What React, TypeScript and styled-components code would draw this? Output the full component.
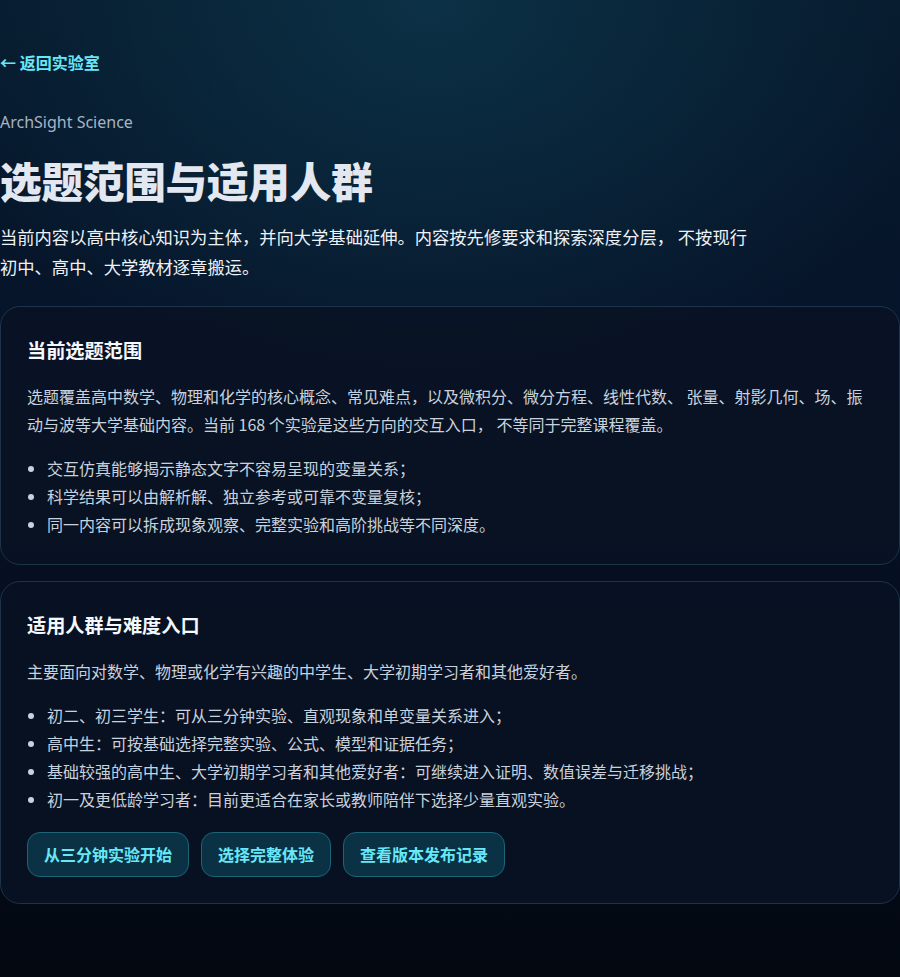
import React from "react";
import styled, { createGlobalStyle } from "styled-components";

const GlobalStyle = createGlobalStyle`
  html, body {
    margin: 0;
    padding: 0;
    background: #040a16;
  }
  body {
    font-family: "Noto Sans", "Noto Sans CJK SC", sans-serif;
    color: #e6ebf2;
  }
  * { box-sizing: border-box; }
`;

const Page = styled.div`
  min-height: 977px;
  background:
    radial-gradient(ellipse 520px 420px at 48% 0%, rgba(13, 56, 78, 0.75), rgba(13, 56, 78, 0) 100%),
    linear-gradient(180deg, #071a2c 0%, #06142a 35%, #050d1d 70%, #030811 100%);
`;

const Main = styled.main`
  width: 900px;
  padding: 50px 0 72px;
  display: flex;
  flex-direction: column;
`;

const BackLink = styled.a`
  display: block;
  font-size: 16px;
  line-height: 24px;
  font-weight: 700;
  color: #67e8f9;
  text-decoration: none;
  font-family: "Noto Sans CJK SC", sans-serif;
`;

const Eyebrow = styled.p`
  margin: 36px 0 0;
  font-size: 16px;
  line-height: 24px;
  color: #a7b4c4;
  font-family: "Noto Sans", "Noto Sans CJK SC", sans-serif;
`;

const Title = styled.h1`
  margin: 21px 0 0;
  font-size: 41.6px;
  line-height: 50px;
  font-weight: 900;
  color: #e3e8f0;
  font-family: "Noto Sans CJK SC", sans-serif;
  letter-spacing: -0.2px;
`;

const Lead = styled.p`
  margin: 17px 0 0;
  max-width: 760px;
  font-size: 17.3px;
  line-height: 30px;
  color: #eef2f7;
  font-family: "Noto Sans CJK SC", sans-serif;
`;

const Cards = styled.div`
  margin-top: 24px;
  display: flex;
  flex-direction: column;
  gap: 16px;
`;

const Card = styled.section`
  border: 1px solid #1d3349;
  border-radius: 20px;
  background: rgba(9, 18, 35, 0.88);
  padding: 31px 33px 26px 26px;
`;

const CardTitle = styled.h2`
  margin: 0;
  font-size: 19.2px;
  line-height: 25px;
  font-weight: 700;
  color: #f5f8fc;
  font-family: "Noto Sans CJK SC", sans-serif;
`;

const CardText = styled.p`
  margin: 19px 0 0;
  font-size: 16px;
  line-height: 28px;
  color: #c8d2de;
  font-family: "Noto Sans CJK SC", sans-serif;
`;

const List = styled.ul`
  margin: 16px 0 0;
  padding: 0 0 0 20px;
  font-size: 16px;
  line-height: 28px;
  color: #c8d2de;
  font-family: "Noto Sans CJK SC", sans-serif;

  li::marker {
    color: #c8d2de;
  }
`;

const Actions = styled.div`
  margin-top: 19px;
  display: flex;
  gap: 12px;
`;

const ActionButton = styled.a`
  display: inline-flex;
  align-items: center;
  padding: 10px 16px;
  font-size: 16px;
  line-height: 23px;
  font-weight: 700;
  color: #67e8f9;
  background: #0a3244;
  border: 1px solid #1c6478;
  border-radius: 13px;
  text-decoration: none;
  font-family: "Noto Sans CJK SC", sans-serif;
`;

const scopeItems = [
  "交互仿真能够揭示静态文字不容易呈现的变量关系；",
  "科学结果可以由解析解、独立参考或可靠不变量复核；",
  "同一内容可以拆成现象观察、完整实验和高阶挑战等不同深度。",
];

const audienceItems = [
  "初二、初三学生：可从三分钟实验、直观现象和单变量关系进入；",
  "高中生：可按基础选择完整实验、公式、模型和证据任务；",
  "基础较强的高中生、大学初期学习者和其他爱好者：可继续进入证明、数值误差与迁移挑战；",
  "初一及更低龄学习者：目前更适合在家长或教师陪伴下选择少量直观实验。",
];

const actions = ["从三分钟实验开始", "选择完整体验", "查看版本发布记录"];

export default function App() {
  return (
    <>
      <GlobalStyle />
      <Page>
        <Main>
          <BackLink href="#">← 返回实验室</BackLink>
          <Eyebrow>ArchSight Science</Eyebrow>
          <Title>选题范围与适用人群</Title>
          <Lead>
            当前内容以高中核心知识为主体，并向大学基础延伸。内容按先修要求和探索深度分层， 不按现行初中、高中、大学教材逐章搬运。
          </Lead>
          <Cards>
            <Card>
              <CardTitle>当前选题范围</CardTitle>
              <CardText>
                选题覆盖高中数学、物理和化学的核心概念、常见难点，以及微积分、微分方程、线性代数、 张量、射影几何、场、振动与波等大学基础内容。当前 168 个实验是这些方向的交互入口， 不等同于完整课程覆盖。
              </CardText>
              <List>
                {scopeItems.map((t) => (
                  <li key={t}>{t}</li>
                ))}
              </List>
            </Card>
            <Card>
              <CardTitle>适用人群与难度入口</CardTitle>
              <CardText>主要面向对数学、物理或化学有兴趣的中学生、大学初期学习者和其他爱好者。</CardText>
              <List>
                {audienceItems.map((t) => (
                  <li key={t}>{t}</li>
                ))}
              </List>
              <Actions>
                {actions.map((a) => (
                  <ActionButton key={a} href="#">
                    {a}
                  </ActionButton>
                ))}
              </Actions>
            </Card>
          </Cards>
        </Main>
      </Page>
    </>
  );
}
